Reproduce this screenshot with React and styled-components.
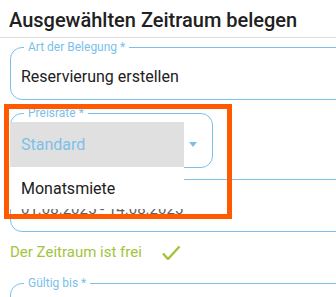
import React from 'react';
import styled, { createGlobalStyle } from 'styled-components';

const GlobalStyle = createGlobalStyle`
  body {
    margin: 0;
    background: #fff;
    font-family: Roboto, "Liberation Sans", sans-serif;
  }
`;

const BLUE = '#7cc0ea';

const Page = styled.div`
  position: relative;
  width: 336px;
  height: 297px;
  overflow: hidden;
`;

const Title = styled.h2`
  margin: 0;
  padding: 8px 0 5px 9px;
  font-size: 20px;
  line-height: 24px;
  font-weight: 500;
  color: #212121;
  border-bottom: 1px solid #dedede;
`;

const Form = styled.div`
  display: flex;
  flex-direction: column;
  padding-left: 10px;
`;

const Field = styled.fieldset`
  box-sizing: border-box;
  min-width: 0;
  width: ${p => p.$w || 340}px;
  margin: ${p => p.$mt || 0}px 0 0;
  padding: 13px 10px 12px;
  border: 1px solid ${BLUE};
  border-radius: 12px;
`;

const Legend = styled.legend`
  margin-left: 3px;
  padding: 0 4px;
  font-size: 12px;
  line-height: 14px;
  color: ${BLUE};
`;

const Value = styled.div`
  font-size: ${p => p.$size || 16}px;
  line-height: 20px;
  color: ${p => p.$color || '#212121'};
  white-space: nowrap;
`;

const SelectWrap = styled.div`
  position: relative;
  margin-top: 6px;
`;

const SelectRow = styled.div`
  display: flex;
  align-items: center;
  justify-content: space-between;
  height: 22px;
`;

const Arrow = styled.span`
  width: 0;
  height: 0;
  margin-right: 5px;
  border-left: 4px solid transparent;
  border-right: 4px solid transparent;
  border-top: 5px solid ${BLUE};
`;

const Menu = styled.ul`
  position: absolute;
  top: 16px;
  left: 0;
  z-index: 1;
  width: 174px;
  margin: 0;
  padding: 0;
  list-style: none;
  background: #fff;
`;

const MenuItem = styled.li`
  display: flex;
  align-items: center;
  height: ${p => p.$h}px;
  padding-left: 11px;
  font-size: 16px;
  color: ${p => (p.$active ? BLUE : '#212121')};
  background: ${p => (p.$active ? '#e0e0e0' : '#fff')};
`;

const Status = styled.div`
  display: flex;
  align-items: center;
  height: 20px;
  margin-top: 10px;
  font-size: 15px;
  color: #a3c33b;
`;

const Check = styled.svg`
  margin-left: 20px;
`;

const Highlight = styled.div`
  position: absolute;
  left: 4px;
  top: 104px;
  z-index: 2;
  box-sizing: border-box;
  width: 228px;
  height: 115px;
  border: 5px solid #ff5a00;
  pointer-events: none;
`;

const menuItems = [
  { label: 'Standard', h: 45, active: true },
  { label: 'Monatsmiete', h: 42 },
];

export default function App() {
  return (
    <Page>
      <GlobalStyle />
      <Title>Ausgewählten Zeitraum belegen</Title>
      <Form>
        <Field $mt={2}>
          <Legend>Art der Belegung *</Legend>
          <Value>Reservierung erstellen</Value>
        </Field>

        <SelectWrap>
          <Field $w={203}>
            <Legend>Preisrate *</Legend>
            <SelectRow>
              <Value $color={BLUE}>Standard</Value>
              <Arrow />
            </SelectRow>
          </Field>
          <Menu>
            {menuItems.map(item => (
              <MenuItem key={item.label} $h={item.h} $active={item.active}>
                {item.label}
              </MenuItem>
            ))}
          </Menu>
        </SelectWrap>

        <Field $mt={4}>
          <Legend>Zeitraum *</Legend>
          <Value $size={15} $color="#616161">01.08.2025 - 14.08.2025</Value>
        </Field>

        <Status>
          Der Zeitraum ist frei
          <Check width="19" height="15" viewBox="0 0 19 15">
            <polyline points="1,8.5 6,14 17.5,1.5" fill="none" stroke="#a3c33b" strokeWidth="2.4" />
          </Check>
        </Status>

        <Field $mt={14}>
          <Legend>Gültig bis *</Legend>
          <Value>&nbsp;</Value>
        </Field>
      </Form>
      <Highlight />
    </Page>
  );
}
